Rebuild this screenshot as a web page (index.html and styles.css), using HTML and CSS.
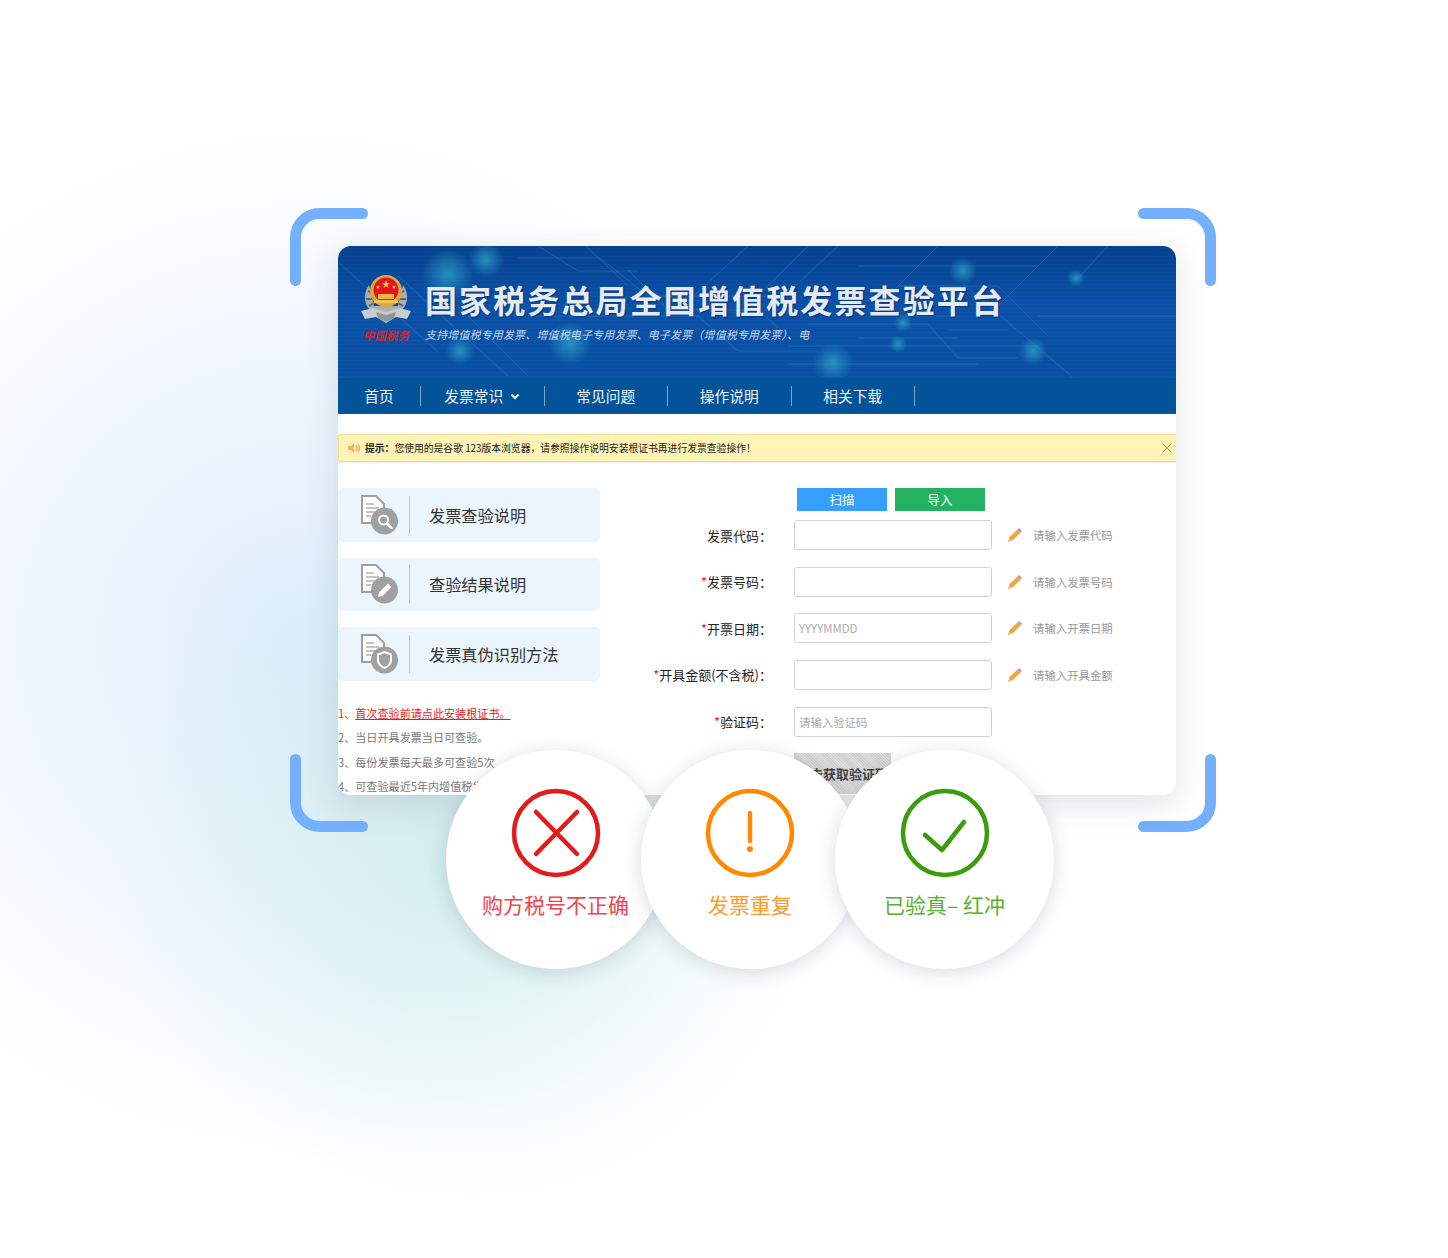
FILE: index.html
```html
<!DOCTYPE html>
<html lang="zh-CN">
<head>
    <meta charset="UTF-8">
    <title>发票查验</title>
    <link rel="stylesheet" href="styles.css">
</head>
<body>
    <div class="stage">
        <svg class="corner corner-tl" width="78" height="78" viewBox="0 0 78 78"><path d="M5.5 72.500V29.500A24 24 0 0 1 29.500 5.500H72.500"/></svg>
        <svg class="corner corner-tr" width="78" height="78" viewBox="0 0 78 78"><path d="M5.500 5.500H48.500A24 24 0 0 1 72.500 29.500V72.500"/></svg>
        <svg class="corner corner-bl" width="78" height="78" viewBox="0 0 78 78"><path d="M5.500 5.500V48.500A24 24 0 0 0 29.500 72.500H72.500"/></svg>
        <svg class="corner corner-br" width="78" height="78" viewBox="0 0 78 78"><path d="M72.500 5.500V48.500A24 24 0 0 1 48.500 72.500H5.500"/></svg>

        <div class="card">
            <div class="hero">
                <svg class="circuit" width="838" height="131" viewBox="0 0 838 131">
                    <defs>
                        <radialGradient id="glow">
                            <stop offset="0" stop-color="#2fa6c8" stop-opacity=".75"/>
                            <stop offset="1" stop-color="#2fa6c8" stop-opacity="0"/>
                        </radialGradient>
                    </defs>
                    <g class="traces">
                        <path d="M0 16L100 106"/>
                        <path d="M60 30L170 130"/>
                        <path d="M120 60L190 130"/>
                        <path d="M180 12H262L310 50H430"/>
                        <path d="M200 0L240 25H300"/>
                        <path d="M248 0L290 40"/>
                        <path d="M290 24L330 64H420L450 90"/>
                        <path d="M190 70H360L400 105H480"/>
                        <path d="M410 0L350 55"/>
                        <path d="M470 0L400 70"/>
                        <path d="M500 0L430 65"/>
                        <path d="M560 40H660L710 90"/>
                        <path d="M520 20H700"/>
                        <path d="M600 0L540 60"/>
                        <path d="M470 78H590L620 112H680"/>
                        <path d="M520 92H620"/>
                        <path d="M450 100H700"/>
                        <path d="M450 118H640"/>
                        <path d="M560 70H620"/>
                        <path d="M625 38L745 140"/>
                        <path d="M720 0L660 60"/>
                        <path d="M770 0L740 32"/>
                        <path d="M610 84H670"/>
                        <path d="M700 70H838"/>
                    </g>
                    <circle cx="110" cy="28" r="26" fill="url(#glow)"/>
                    <circle cx="148" cy="14" r="18" fill="url(#glow)"/>
                    <circle cx="232" cy="97" r="22" fill="url(#glow)"/>
                    <circle cx="122" cy="105" r="14" fill="url(#glow)"/>
                    <circle cx="625" cy="25" r="14" fill="url(#glow)"/>
                    <circle cx="695" cy="105" r="14" fill="url(#glow)"/>
                    <circle cx="565" cy="77" r="9" fill="url(#glow)"/>
                    <circle cx="560" cy="98" r="9" fill="url(#glow)"/>
                    <circle cx="495" cy="117" r="20" fill="url(#glow)"/>
                    <circle cx="738" cy="32" r="9" fill="url(#glow)"/>
                </svg>
                <div class="badge">
                    <svg width="52" height="54" viewBox="0 0 52 54">
                        <path d="M9 12C2 22 4 34 14 40H38C48 34 50 22 43 12L38 33H14Z" fill="#a9adaf"/>
                        <path d="M8 18l5 2M6 26l6 0M9 33l5-3M44 18l-5 2M46 26l-6 0M43 33l-5-3" stroke="#5d6368" stroke-width="2"/>
                        <circle cx="26" cy="18" r="16" fill="#d9a93c"/>
                        <circle cx="26" cy="17" r="12.500" fill="#e3141c"/>
                        <path d="M26 7l1 3h3l-2.500 2 1 3-2.500-2-2.500 2 1-3-2.500-2h3zM18 12l.6 1.500h1.600l-1.300 1 .5 1.500-1.400-1-1.400 1 .5-1.500-1.300-1h1.600zM34 12l.6 1.500h1.600l-1.300 1 .5 1.500-1.400-1-1.400 1 .5-1.500-1.300-1h1.600z" fill="#f6d24a"/>
                        <path d="M18 26V21H34V26Z" fill="#e9b640"/>
                        <path d="M15 27H37L39 30H13Z" fill="#f3c34e"/>
                        <path d="M1 38L13 35L26 39L39 35L51 38L47 46L36 44L26 50L16 44L5 46Z" fill="#c9cdcd"/>
                        <path d="M16 39L26 42L36 39L34 45L26 49L18 45Z" fill="#8f9698"/>
                    </svg>
                    <span class="badge-name">中国税务</span>
                </div>
                <div class="hero-text">
                    <h1 class="hero-title">国家税务总局全国增值税发票查验平台</h1>
                    <p class="hero-sub">支持增值税专用发票、增值税电子专用发票、电子发票（增值税专用发票）、电</p>
                </div>
            </div>

            <div class="nav">
                <a class="nav-item nav-home">首页</a>
                <a class="nav-item">发票常识<svg class="chevron" width="10" height="7" viewBox="0 0 10 7"><path d="M1.500 1.500L5 5L8.500 1.500"/></svg></a>
                <a class="nav-item">常见问题</a>
                <a class="nav-item">操作说明</a>
                <a class="nav-item">相关下载</a>
            </div>

            <div class="notice">
                <svg class="notice-icon" width="12" height="10" viewBox="0 0 12 10">
                    <path d="M0 3H3L6 0V10L3 7H0Z" fill="#f7b267"/>
                    <path d="M8 2.500Q10 5 8 7.500M10 1Q12.500 5 10 9" fill="none" stroke="#f7a25a" stroke-width="1.300"/>
                </svg>
                <span class="notice-text"><b>提示：</b>您使用的是谷歌 123版本浏览器，请参照操作说明安装根证书再进行发票查验操作！</span>
                <svg class="notice-close" width="10" height="10" viewBox="0 0 10 10"><path d="M.5.5L9.500 9.500M9.500.5L.5 9.500"/></svg>
            </div>

            <div class="main">
                <div class="side">
                    <div class="guide">
                        <svg class="guide-icon" width="37" height="40" viewBox="0 0 37 40">
                            <path class="doc" d="M1 1H15L23 9V28H1Z"/>
                            <path class="doc-lines" d="M5 9H13M5 13H18M5 17H14M5 21H10"/>
                            <circle class="disc" cx="23.500" cy="26" r="13.500"/>
                            <circle cx="22.500" cy="25" r="4.500" fill="none" stroke="#fff" stroke-width="2"/>
                            <path d="M26 28.500L30.500 33" stroke="#fff" stroke-width="2.500" stroke-linecap="round"/>
                        </svg>
                        <span class="guide-sep"></span>
                        <span class="guide-text">发票查验说明</span>
                    </div>
                    <div class="guide">
                        <svg class="guide-icon" width="37" height="40" viewBox="0 0 37 40">
                            <path class="doc" d="M1 1H15L23 9V28H1Z"/>
                            <path class="doc-lines" d="M5 9H13M5 13H18M5 17H14M5 21H10"/>
                            <circle class="disc" cx="23.500" cy="26" r="13.500"/>
                            <path d="M17 33L18 28.500L27 19.500L30.500 23L21.500 32Z" fill="#fff"/>
                        </svg>
                        <span class="guide-sep"></span>
                        <span class="guide-text">查验结果说明</span>
                    </div>
                    <div class="guide">
                        <svg class="guide-icon" width="37" height="40" viewBox="0 0 37 40">
                            <path class="doc" d="M1 1H15L23 9V28H1Z"/>
                            <path class="doc-lines" d="M5 9H13M5 13H18M5 17H14M5 21H10"/>
                            <circle class="disc" cx="23.500" cy="26" r="13.500"/>
                            <path d="M23.500 18L30 20.500V26C30 30 27 32.500 23.500 34C20 32.500 17 30 17 26V20.500Z" fill="none" stroke="#fff" stroke-width="2"/>
                        </svg>
                        <span class="guide-sep"></span>
                        <span class="guide-text">发票真伪识别方法</span>
                    </div>
                    <ul class="tips">
                        <li class="tip-red">1、<u>首次查验前请点此安装根证书。</u></li>
                        <li>2、当日开具发票当日可查验。</li>
                        <li>3、每份发票每天最多可查验5次</li>
                        <li>4、可查验最近5年内增值税发票</li>
                    </ul>
                </div>

                <div class="form">
                    <div class="form-btns">
                        <button class="btn btn-blue">扫描</button>
                        <button class="btn btn-green">导入</button>
                    </div>
                    <div class="rows">
                        <div class="row">
                            <label class="row-label">发票代码：</label>
                            <div class="field"></div>
                            <svg class="pencil" width="14" height="14" viewBox="0 0 14 14"><path d="M0 14L1.500 9L9.500 1.500L12.500 4.500L5 12Z" fill="#f0a63c"/><path d="M9.500 1.500L11 0L14 3L12.500 4.500Z" fill="#c98bb0"/><path d="M0 14L1 10.500L3.500 13Z" fill="#e8c98f"/></svg>
                            <span class="row-hint">请输入发票代码</span>
                        </div>
                        <div class="row">
                            <label class="row-label"><i>*</i>发票号码：</label>
                            <div class="field"></div>
                            <svg class="pencil" width="14" height="14" viewBox="0 0 14 14"><path d="M0 14L1.500 9L9.500 1.500L12.500 4.500L5 12Z" fill="#f0a63c"/><path d="M9.500 1.500L11 0L14 3L12.500 4.500Z" fill="#c98bb0"/><path d="M0 14L1 10.500L3.500 13Z" fill="#e8c98f"/></svg>
                            <span class="row-hint">请输入发票号码</span>
                        </div>
                        <div class="row">
                            <label class="row-label"><i>*</i>开票日期：</label>
                            <div class="field">YYYYMMDD</div>
                            <svg class="pencil" width="14" height="14" viewBox="0 0 14 14"><path d="M0 14L1.500 9L9.500 1.500L12.500 4.500L5 12Z" fill="#f0a63c"/><path d="M9.500 1.500L11 0L14 3L12.500 4.500Z" fill="#c98bb0"/><path d="M0 14L1 10.500L3.500 13Z" fill="#e8c98f"/></svg>
                            <span class="row-hint">请输入开票日期</span>
                        </div>
                        <div class="row">
                            <label class="row-label"><i>*</i>开具金额(不含税)：</label>
                            <div class="field"></div>
                            <svg class="pencil" width="14" height="14" viewBox="0 0 14 14"><path d="M0 14L1.500 9L9.500 1.500L12.500 4.500L5 12Z" fill="#f0a63c"/><path d="M9.500 1.500L11 0L14 3L12.500 4.500Z" fill="#c98bb0"/><path d="M0 14L1 10.500L3.500 13Z" fill="#e8c98f"/></svg>
                            <span class="row-hint">请输入开具金额</span>
                        </div>
                        <div class="row">
                            <label class="row-label"><i>*</i>验证码：</label>
                            <div class="field">请输入验证码</div>
                        </div>
                        <div class="captcha">点击获取验证码</div>
                    </div>
                </div>
            </div>
        </div>

        <div class="results">
            <div class="result result-red">
                <svg class="result-icon" width="92" height="92" viewBox="0 0 92 92">
                    <circle cx="46" cy="46" r="42"/>
                    <path d="M26 25L67 67M67 25L26 67"/>
                </svg>
                <span class="result-text">购方税号不正确</span>
            </div>
            <div class="result result-orange">
                <svg class="result-icon" width="92" height="92" viewBox="0 0 92 92">
                    <circle cx="46" cy="46" r="42"/>
                    <path d="M46 26V54"/>
                    <circle class="dot" cx="46" cy="62" r="3"/>
                </svg>
                <span class="result-text">发票重复</span>
            </div>
            <div class="result result-green">
                <svg class="result-icon" width="92" height="92" viewBox="0 0 92 92">
                    <circle cx="46" cy="46" r="42"/>
                    <path d="M26 48L43 63L65 35"/>
                </svg>
                <span class="result-text">已验真– 红冲</span>
            </div>
        </div>
    </div>
</body>
</html>
```

FILE: styles.css
```css
* {
    margin: 0;
    padding: 0;
    box-sizing: border-box;
    font-family: "Noto Sans CJK SC", "Noto Sans", sans-serif;
}

body {
    background-color: #fff;
}

.stage {
    position: relative;
    width: 1448px;
    height: 1258px;
    padding: 246px 0 0 338px;
    overflow: hidden;
    background:
        radial-gradient(circle 360px at 470px 850px, rgba(190, 232, 226, .6), rgba(190, 232, 226, 0)),
        radial-gradient(circle 520px at 300px 640px, rgba(196, 222, 250, .55), rgba(196, 222, 250, 0));
}

.corner {
    position: absolute;
}

.corner path {
    fill: none;
    stroke: #74b0fd;
    stroke-width: 11;
    stroke-linecap: round;
}

.corner-tl { left: 290px; top: 208px; }
.corner-tr { left: 1138px; top: 208px; }
.corner-bl { left: 290px; top: 754px; }
.corner-br { left: 1138px; top: 754px; }

.card {
    position: relative;
    width: 838px;
    height: 549px;
    background-color: #fff;
    border-radius: 13px;
    overflow: hidden;
    box-shadow: 0 8px 34px rgba(40, 50, 70, .14);
}

/* banner */
.hero {
    position: relative;
    display: flex;
    height: 131px;
    padding: 27px 0 0 22px;
    background:
        repeating-linear-gradient(0deg, rgba(255, 255, 255, .025) 0 1px, transparent 1px 4px),
        linear-gradient(180deg, #05418f 0%, #0a50a8 45%, #0950a4 100%);
}

.circuit {
    position: absolute;
    left: 0;
    top: 0;
}

.traces path {
    fill: none;
    stroke: rgba(70, 160, 225, .3);
    stroke-width: 1;
}

.badge {
    position: relative;
    display: flex;
    flex-direction: column;
    align-items: center;
    width: 52px;
}

.badge-name {
    margin-top: 1px;
    color: #d8232a;
    font-size: 11.500px;
    font-weight: 700;
    font-style: italic;
    line-height: 15px;
    white-space: nowrap;
}

.hero-text {
    position: relative;
    margin-left: 13px;
}

.hero-title {
    color: #e6ebf1;
    font-size: 32px;
    font-weight: 700;
    line-height: 52px;
    letter-spacing: 2.120px;
    white-space: nowrap;
    text-shadow: 1px 1px 1px rgba(0, 20, 70, .5);
}

.hero-sub {
    margin-top: 1px;
    color: #c9d6e8;
    font-size: 11px;
    font-style: italic;
    line-height: 16px;
    letter-spacing: .14px;
    white-space: nowrap;
}

.nav {
    display: flex;
    align-items: center;
    height: 37px;
    background-color: #03539b;
    border-top: 1px solid #0b5aa5;
    border-bottom: 1px solid #0a5aa6;
}

.nav-item {
    display: flex;
    align-items: center;
    justify-content: center;
    width: 123.500px;
    height: 20px;
    color: #f1f4f8;
    font-size: 14.700px;
    line-height: 20px;
    border-right: 1px solid #7fa5cb;
}

.nav-home {
    width: 83px;
}

.chevron {
    margin-left: 7px;
    margin-top: 2px;
}

.chevron path {
    fill: none;
    stroke: #fff;
    stroke-width: 2;
}

.notice {
    display: flex;
    align-items: center;
    height: 28px;
    margin-top: 20px;
    padding: 0 4px 0 9px;
    background-color: #fff4b5;
    border: 1px solid #f3dc96;
    border-right: none;
    border-radius: 3px 0 0 3px;
    box-shadow: 0 1px 1px rgba(0, 0, 0, .08);
}

.notice-text {
    margin-left: 5px;
    color: #222;
    font-size: 9.800px;
}

.notice-close {
    margin-left: auto;
    margin-right: 0;
}

.notice-close path {
    fill: none;
    stroke: #e8844a;
    stroke-width: 1;
}

.main {
    display: flex;
    margin-top: 26px;
}

.side {
    display: flex;
    flex-direction: column;
    gap: 16px;
    width: 262px;
}

.guide {
    display: flex;
    align-items: center;
    height: 53.500px;
    padding-left: 23px;
    background-color: #eaf5fe;
    border-radius: 5px;
}

.guide-icon {
    flex: none;
}

.doc {
    fill: #fff;
    stroke: #9f9f9f;
    stroke-width: 2;
}

.doc-lines {
    fill: none;
    stroke: #b3b3b3;
    stroke-width: 1.500;
}

.disc {
    fill: #a0a0a0;
}

.guide-sep {
    width: 1px;
    height: 38px;
    margin-left: 11px;
    background-color: #bcc3c8;
}

.guide-text {
    margin-left: 19px;
    color: #333;
    font-size: 16.200px;
}

.tips {
    margin-top: 4px;
    list-style: none;
}

.tips li {
    height: 24.600px;
    color: #777;
    font-size: 11.100px;
    line-height: 24.600px;
    white-space: nowrap;
}

.tips .tip-red {
    color: #f01818;
}

/* form column */
.form {
    flex: 1;
}

.form-btns {
    display: flex;
    gap: 8px;
    margin-left: 197px;
    margin-bottom: 9px;
}

.btn {
    width: 90px;
    height: 23px;
    color: #fff;
    font-size: 12.500px;
    border: none;
}

.btn-blue {
    background-color: #359ffb;
}

.btn-green {
    background-color: #23b162;
}

.rows {
    display: flex;
    flex-direction: column;
    gap: 16.670px;
}

.row {
    display: flex;
    align-items: center;
    height: 30px;
}

.row-label {
    width: 172px;
    color: #222;
    font-size: 13px;
    text-align: right;
    white-space: nowrap;
}

.row-label i {
    color: #f01818;
    font-style: normal;
}

.field {
    width: 198px;
    height: 30px;
    margin-left: 22px;
    padding-left: 4px;
    color: #aaa;
    font-size: 11.400px;
    line-height: 28px;
    background-color: #fff;
    border: 1px solid #d2d2d2;
    border-radius: 3px;
}

.pencil {
    margin-left: 16px;
}

.row-hint {
    margin-left: 11px;
    color: #999;
    font-size: 11.400px;
}

.captcha {
    width: 97px;
    height: 41px;
    margin-left: 194px;
    overflow: hidden;
    color: #444;
    font-size: 13px;
    font-weight: 700;
    line-height: 41px;
    text-align: center;
    white-space: nowrap;
    background: repeating-linear-gradient(45deg, #cfcfcf 0 1px, #dcdcdc 1px 2px);
}

/* result circles */
.results {
    position: relative;
    display: flex;
    gap: -25px;
    margin: -45px 0 0 108px;
}

.result {
    display: flex;
    flex-direction: column;
    align-items: center;
    flex: none;
    width: 219px;
    height: 219px;
    margin-right: -24.500px;
    padding-top: 37px;
    background-color: #fff;
    border-radius: 50%;
    box-shadow: 0 3px 20px rgba(30, 40, 60, .16);
}

.result-icon circle {
    fill: none;
    stroke-width: 4.500;
}

.result-icon path {
    fill: none;
    stroke-width: 4.500;
    stroke-linecap: round;
    stroke-linejoin: round;
}

.result-icon .dot {
    stroke: none;
}

.result-text {
    margin-top: 10px;
    font-size: 21px;
    line-height: 30px;
    white-space: nowrap;
}

.result-red .result-icon circle,
.result-red .result-icon path {
    stroke: #e31b1b;
}

.result-red .result-text {
    color: #f1444c;
}

.result-orange .result-icon circle,
.result-orange .result-icon path {
    stroke: #ff8a00;
}

.result-orange .result-icon .dot {
    fill: #ff8a00;
    stroke: none;
}

.result-orange .result-text {
    color: #ff9a2e;
}

.result-green .result-icon circle,
.result-green .result-icon path {
    stroke: #3b9c0c;
}

.result-green .result-text {
    color: #56b02c;
}
```
